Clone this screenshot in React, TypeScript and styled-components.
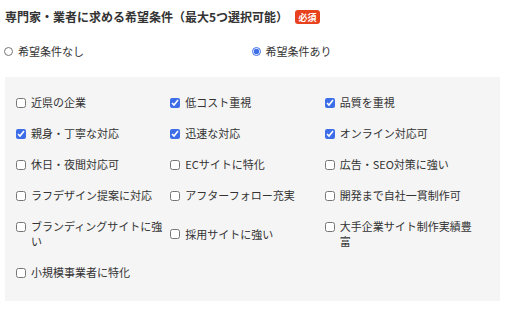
import React, { useState } from "react";
import styled, { createGlobalStyle } from "styled-components";

const GlobalStyle = createGlobalStyle`
  body {
    margin: 0;
    background: #ffffff;
    font-family: "Noto Sans CJK JP", "Noto Sans", sans-serif;
    color: #333333;
  }
`;

const Container = styled.div`
  display: flex;
  flex-direction: column;
  width: 495px;
  padding: 7px 8px 0 5px;
`;

const TitleRow = styled.div`
  display: flex;
  align-items: center;
  height: 20px;
`;

const TitleText = styled.h2`
  margin: 0;
  font-size: 12px;
  line-height: 20px;
  font-weight: 700;
  color: #333333;
`;

const RequiredBadge = styled.span`
  display: inline-flex;
  align-items: center;
  justify-content: center;
  margin-left: 7px;
  width: 25px;
  height: 14px;
  border-radius: 3px;
  background: #e8411d;
  color: #ffffff;
  font-size: 9px;
  font-weight: 700;
  line-height: 1;
`;

const RadioRow = styled.div`
  display: grid;
  grid-template-columns: 1fr 1fr;
  margin-top: 16px;
  height: 16px;
`;

const RadioLabel = styled.label`
  display: flex;
  align-items: center;
  gap: 5px;
  font-size: 11px;
  line-height: 16px;
  cursor: pointer;
`;

const RadioInput = styled.input`
  width: 9px;
  height: 9px;
  margin: 0 0 0 -1px;
  accent-color: #3d6ee8;
`;

const Panel = styled.div`
  display: grid;
  grid-template-columns: repeat(3, 1fr);
  row-gap: 16px;
  margin-top: 18px;
  padding: 18px 21px 21px 11px;
  background: #f5f5f5;
`;

const Option = styled.label`
  display: flex;
  align-items: flex-start;
  align-self: center;
  gap: 5px;
  font-size: 11px;
  line-height: 15px;
  color: #333333;
  cursor: pointer;
`;

const CheckBox = styled.input`
  flex: none;
  width: 10px;
  height: 10px;
  margin: 2.5px 0 0 0;
  accent-color: #3d6ee8;
`;

const OptionText = styled.span`
  flex: 1;
  min-width: 0;
  padding-right: 4px;
`;

const OPTIONS = [
  { label: "近県の企業", checked: false },
  { label: "低コスト重視", checked: true },
  { label: "品質を重視", checked: true },
  { label: "親身・丁寧な対応", checked: true },
  { label: "迅速な対応", checked: true },
  { label: "オンライン対応可", checked: true },
  { label: "休日・夜間対応可", checked: false },
  { label: "ECサイトに特化", checked: false },
  { label: "広告・SEO対策に強い", checked: false },
  { label: "ラフデザイン提案に対応", checked: false },
  { label: "アフターフォロー充実", checked: false },
  { label: "開発まで自社一貫制作可", checked: false },
  { label: "ブランディングサイトに強い", checked: false },
  { label: "採用サイトに強い", checked: false },
  { label: "大手企業サイト制作実績豊富", checked: false },
  { label: "小規模事業者に特化", checked: false },
];

export default function App() {
  const [hasConditions, setHasConditions] = useState(true);
  const [selected, setSelected] = useState(OPTIONS.map((o) => o.checked));

  const toggle = (index: number) => {
    setSelected(selected.map((value, i) => (i === index ? !value : value)));
  };

  return (
    <Container>
      <GlobalStyle />
      <TitleRow>
        <TitleText>専門家・業者に求める希望条件（最大5つ選択可能）</TitleText>
        <RequiredBadge>必須</RequiredBadge>
      </TitleRow>
      <RadioRow>
        <RadioLabel>
          <RadioInput
            type="radio"
            name="conditions"
            checked={!hasConditions}
            onChange={() => setHasConditions(false)}
          />
          希望条件なし
        </RadioLabel>
        <RadioLabel>
          <RadioInput
            type="radio"
            name="conditions"
            checked={hasConditions}
            onChange={() => setHasConditions(true)}
          />
          希望条件あり
        </RadioLabel>
      </RadioRow>
      <Panel>
        {OPTIONS.map((option, i) => (
          <Option key={option.label}>
            <CheckBox
              type="checkbox"
              checked={selected[i]}
              onChange={() => toggle(i)}
            />
            <OptionText>{option.label}</OptionText>
          </Option>
        ))}
      </Panel>
    </Container>
  );
}
